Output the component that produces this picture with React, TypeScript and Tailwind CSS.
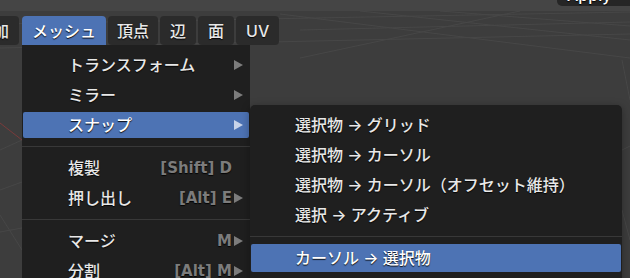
const mainItems = [
  { label: "トランスフォーム", arrow: true },
  { label: "ミラー", arrow: true },
  { label: "スナップ", arrow: true, active: true },
  { sep: true },
  { label: "複製", shortcut: "[Shift] D" },
  { label: "押し出し", shortcut: "[Alt] E", arrow: true },
  { sep: true },
  { label: "マージ", shortcut: "M", arrow: true },
  { label: "分割", shortcut: "[Alt] M", arrow: true },
];

const snapItems = [
  { label: "選択物 → グリッド" },
  { label: "選択物 → カーソル" },
  { label: "選択物 → カーソル（オフセット維持）" },
  { label: "選択 → アクティブ" },
  { sep: true },
  { label: "カーソル → 選択物", active: true },
];

function Arrow({ light }: { light?: boolean }) {
  return (
    <svg width="9" height="10" viewBox="0 0 9 10" className="shrink-0">
      <path d="M0 0 L9 5 L0 10 Z" fill={light ? "#c8d4ea" : "#7c7c7c"} />
    </svg>
  );
}

function Grid() {
  return (
    <svg className="absolute inset-0" width="630" height="278" viewBox="0 0 630 278">
      <rect x="0" y="0" width="630" height="11" fill="#454545" />
      <g stroke="#474747" strokeWidth="1" fill="none">
        <line x1="0" y1="24" x2="630" y2="12" />
        <line x1="0" y1="48" x2="630" y2="34" />
        <line x1="300" y1="30" x2="630" y2="22" />
        <line x1="280" y1="14" x2="630" y2="58" />
        <line x1="360" y1="11" x2="630" y2="40" />
        <line x1="440" y1="11" x2="630" y2="26" />
        <line x1="300" y1="58" x2="520" y2="11" />
        <line x1="0" y1="150" x2="22" y2="140" />
        <line x1="0" y1="190" x2="22" y2="182" />
        <line x1="0" y1="232" x2="22" y2="228" />
        <line x1="0" y1="215" x2="22" y2="250" />
        <line x1="622" y1="60" x2="630" y2="100" />
        <line x1="622" y1="150" x2="630" y2="146" />
        <line x1="622" y1="210" x2="630" y2="240" />
      </g>
      <line x1="0" y1="123" x2="22" y2="140" stroke="#7a3b3b" strokeWidth="1" />
    </svg>
  );
}

export default function App() {
  return (
    <div
      className="relative w-[630px] h-[278px] overflow-hidden bg-[#3d3d3d] text-[16px] font-medium text-[#e8e8e8] [text-shadow:0_1px_1px_rgba(0,0,0,0.9)]"
      style={{ fontFamily: '"Inter", "Noto Sans CJK JP", sans-serif' }}
    >
      <Grid />

      {/* panel peeking in at the top right */}
      <div className="absolute right-0 top-0 w-[73px] h-[6px] rounded-bl-[5px] bg-[#262626] overflow-hidden">
        <div className="pl-[10px] mt-[-14px] leading-[18px] text-white">Apply</div>
      </div>

      {/* header menus */}
      <div className="relative flex items-end gap-[2px] pt-[16px] ml-[-33px] leading-none">
        <div className="h-[29px] flex items-center px-[10px] rounded-[4px] bg-[#2b2b2b]">追加</div>
        <div className="h-[29px] flex items-center px-[10px] ml-[1px] rounded-t-[4px] bg-[#4d73b4] text-white">メッシュ</div>
        <div className="h-[29px] flex items-center px-[9px] rounded-[4px] bg-[#2b2b2b]">頂点</div>
        <div className="h-[29px] flex items-center px-[10px] rounded-[4px] bg-[#2b2b2b]">辺</div>
        <div className="h-[29px] flex items-center px-[10px] rounded-[4px] bg-[#2b2b2b]">面</div>
        <div className="h-[29px] flex items-center px-[10px] rounded-[4px] bg-[#2b2b2b]">UV</div>
      </div>

      {/* mesh menu */}
      <div className="absolute left-[22px] top-[45px] w-[228px] h-[260px] bg-[#1f1f1f] pt-[5px]">
        {mainItems.map((it, i) =>
          it.sep ? (
            <div key={i} className="h-[13px] flex items-center">
              <div className="w-full h-px bg-[#383838]" />
            </div>
          ) : (
            <div key={i} className="h-[30px] px-[1px] py-[2px]">
              <div
                className={`h-full flex items-center pl-[45px] pr-[6px] rounded-[2px] ${
                  it.active ? "bg-[#4d73b4] text-white" : ""
                }`}
              >
                <span className="flex-1">{it.label}</span>
                {it.shortcut && (
                  <span className="text-[#7c7c7c] text-[15px] font-bold font-['DejaVu_Sans',sans-serif]">
                    {it.shortcut}
                  </span>
                )}
                <span className="w-[11px] flex justify-end">{it.arrow && <Arrow light={it.active} />}</span>
              </div>
            </div>
          )
        )}
      </div>

      {/* snap submenu */}
      <div className="absolute left-[250px] top-[105px] w-[372px] h-[190px] rounded-[5px] bg-[#1f1f1f] pt-[5px] shadow-[0_2px_8px_rgba(0,0,0,0.35)]">
        {snapItems.map((it, i) =>
          it.sep ? (
            <div key={i} className="h-[13px] flex items-center">
              <div className="w-full h-px bg-[#383838]" />
            </div>
          ) : (
            <div key={i} className="h-[30px] px-[1px] py-[1px]">
              <div
                className={`h-full flex items-center pl-[44px] rounded-[2px] ${
                  it.active ? "bg-[#4d73b4] text-white" : ""
                }`}
              >
                {it.label}
              </div>
            </div>
          )
        )}
      </div>
    </div>
  );
}
